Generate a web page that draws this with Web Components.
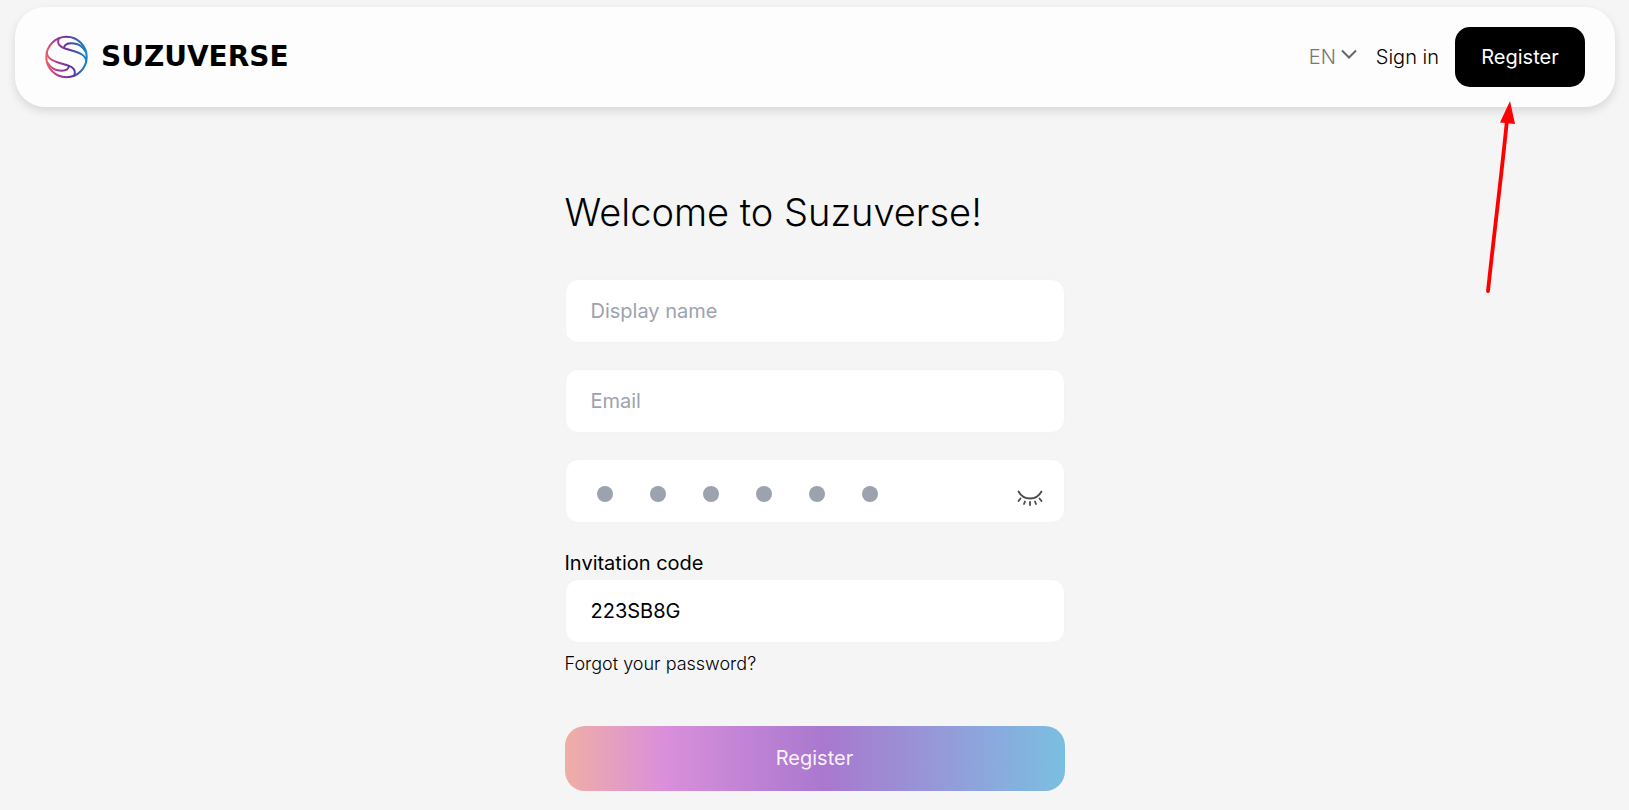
<!DOCTYPE html>
<html lang="en">
<head>
<meta charset="UTF-8">
<meta name="viewport" content="width=device-width, initial-scale=1.0">
<title>Suzuverse</title>
<style>
    body {
        margin: 0;
        min-height: 100vh;
        background-color: #f5f5f5;
        color: #000;
        font-family: Inter, "Liberation Sans", sans-serif;
        font-size: 20px;
        font-weight: 300;
    }
</style>
</head>
<body>
<suzu-page>
    <suzu-header slot="header">
        <suzu-logo slot="brand"></suzu-logo>
        <suzu-language></suzu-language>
        <suzu-link href="#signin">Sign in</suzu-link>
        <suzu-button>Register</suzu-button>
    </suzu-header>
    <suzu-register-form></suzu-register-form>
    <suzu-pointer slot="overlay"></suzu-pointer>
</suzu-page>

<script>
class SuzuPage extends HTMLElement {
    connectedCallback() {
        this.attachShadow({ mode: 'open' });
        this.shadowRoot.innerHTML = `
            <style>
                :host {
                    display: block;
                    position: relative;
                }

                main {
                    display: flex;
                    justify-content: center;
                    padding: 80px 15px 18px;
                }
            </style>
            <slot name="header"></slot>
            <main><slot></slot></main>
            <slot name="overlay"></slot>
        `;
    }
}

class SuzuHeader extends HTMLElement {
    connectedCallback() {
        this.attachShadow({ mode: 'open' });
        this.shadowRoot.innerHTML = `
            <style>
                :host {
                    display: block;
                    padding: 7px 14px 0 15px;
                }

                header {
                    display: flex;
                    justify-content: space-between;
                    align-items: center;
                    padding: 20px 30px;
                    border-radius: 30px;
                    background-color: #fdfdfd;
                    box-shadow: 0 4px 10px rgba(0, 0, 0, 0.12);
                }

                nav {
                    display: flex;
                    align-items: center;
                    gap: 16px;
                }
            </style>
            <header>
                <slot name="brand"></slot>
                <nav><slot></slot></nav>
            </header>
        `;
    }
}

class SuzuLogo extends HTMLElement {
    connectedCallback() {
        this.attachShadow({ mode: 'open' });
        this.shadowRoot.innerHTML = `
            <style>
                :host {
                    display: block;
                }

                a {
                    display: flex;
                    align-items: center;
                    gap: 12px;
                    color: #000;
                    font: 700 28px/32px "DejaVu Sans", sans-serif;
                    text-decoration: none;
                }
            </style>
            <a href="#">
                <svg width="44" height="44" viewBox="0 0 44 44" fill="none" stroke="url(#ring)" stroke-width="2" aria-hidden="true">
                    <defs>
                        <linearGradient id="ring" gradientUnits="userSpaceOnUse" x1="1" y1="24" x2="43" y2="20">
                            <stop offset="0" stop-color="#ed6060"/>
                            <stop offset="0.25" stop-color="#a83c98"/>
                            <stop offset="0.55" stop-color="#64309b"/>
                            <stop offset="0.8" stop-color="#3066b8"/>
                            <stop offset="1" stop-color="#0a8bd0"/>
                        </linearGradient>
                    </defs>
                    <circle cx="21.5" cy="22" r="20.2"/>
                    <path d="M14 3C11.500 9 15 12 20 13.500L30 16.500C38 19 42 22 41 28"/>
                    <path d="M19 13C19.500 9 24 8 29 8.500C35 9 38 12 41 17"/>
                    <path d="M29 41C31.500 35 28 32 23 30.500L13 27.500C5 25 1 22 2 16"/>
                    <path d="M24 31C23.500 35 19 36 14 35.500C8 35 5 32 2 27"/>
                </svg>
                <span>SUZUVERSE</span>
            </a>
        `;
    }
}

class SuzuLanguage extends HTMLElement {
    connectedCallback() {
        this.attachShadow({ mode: 'open' });
        this.shadowRoot.innerHTML = `
            <style>
                :host {
                    display: flex;
                    align-items: center;
                    color: #777;
                }

                label {
                    display: grid;
                    align-items: center;
                }

                select, svg {
                    grid-area: 1 / 1;
                }

                select {
                    appearance: none;
                    width: 51px;
                    margin: 0;
                    padding: 0;
                    border: 0;
                    background: none;
                    color: inherit;
                    font: inherit;
                }

                svg {
                    justify-self: end;
                    margin: 0 3px 6px 0;
                    pointer-events: none;
                }
            </style>
            <label>
                <select aria-label="Language">
                    <option>EN</option>
                </select>
                <svg width="16" height="10" viewBox="0 0 16 10" fill="none" stroke="#666" stroke-width="2" aria-hidden="true">
                    <path d="M1 1.500L8 8.500L15 1.500"/>
                </svg>
            </label>
        `;
    }
}

class SuzuLink extends HTMLElement {
    connectedCallback() {
        this.attachShadow({ mode: 'open' });
        this.shadowRoot.innerHTML = `
            <style>
                :host {
                    display: block;
                }

                a {
                    color: #000;
                    text-decoration: none;
                }
            </style>
            <a href="${this.getAttribute('href')}"><slot></slot></a>
        `;
    }
}

class SuzuButton extends HTMLElement {
    connectedCallback() {
        this.attachShadow({ mode: 'open' });
        this.shadowRoot.innerHTML = `
            <style>
                :host {
                    display: block;
                }

                button {
                    display: block;
                    width: 100%;
                    min-width: 130px;
                    padding: 18px 24px;
                    border: 0;
                    border-radius: 15px;
                    background: #000;
                    color: #fff;
                    font: 400 20px/24px Inter, sans-serif;
                    cursor: pointer;
                }

                :host([variant="gradient"]) button {
                    padding: 20px 24px 21px;
                    border-radius: 20px;
                    background: linear-gradient(90deg, #efaea5, #d98fdb 20%, #a978cf 52%, #949bd9 76%, #7abfe1);
                    color: #f8f2fb;
                }
            </style>
            <button type="button"><slot></slot></button>
        `;
    }
}

class SuzuField extends HTMLElement {
    connectedCallback() {
        const type = this.getAttribute('type') || 'text';
        const label = this.getAttribute('label') || '';
        const placeholder = this.getAttribute('placeholder') || '';
        const value = this.getAttribute('value') || '';
        const isPassword = type === 'password';

        this.attachShadow({ mode: 'open' });
        this.shadowRoot.innerHTML = `
            <style>
                :host {
                    display: block;
                    font-weight: 400;
                }

                label {
                    display: block;
                    line-height: 28px;
                    padding-bottom: 2px;
                }

                .box {
                    display: flex;
                    align-items: center;
                    position: relative;
                    border: 1px solid #f3f3f3;
                    border-radius: 13px;
                    background-color: #fff;
                }

                input {
                    flex: 1;
                    min-width: 0;
                    box-sizing: border-box;
                    height: 62px;
                    padding: 0 25px;
                    border: 0;
                    border-radius: 12px;
                    outline: none;
                    background: none;
                    color: #000;
                    font: inherit;
                }

                input::placeholder {
                    color: #9ca3af;
                    opacity: 1;
                }

                .dots {
                    position: absolute;
                    left: 31px;
                    top: 26px;
                    pointer-events: none;
                }

                input:not(:placeholder-shown) ~ .dots {
                    display: none;
                }

                button {
                    display: flex;
                    margin: 13px 21px 0 0;
                    padding: 0;
                    border: 0;
                    background: none;
                    cursor: pointer;
                }
            </style>
            ${label ? `<label for="input">${label}</label>` : ''}
            <div class="box">
                <input id="input" type="${type}" placeholder="${isPassword ? ' ' : placeholder}" value="${value}"
                    ${label ? '' : `aria-label="${placeholder}"`}>
                ${isPassword ? `
                <svg class="dots" width="282" height="16" viewBox="0 0 282 16" fill="#9ca3af" aria-hidden="true">
                    <circle cx="8" cy="8" r="8"/>
                    <circle cx="61" cy="8" r="8"/>
                    <circle cx="114" cy="8" r="8"/>
                    <circle cx="167" cy="8" r="8"/>
                    <circle cx="220" cy="8" r="8"/>
                    <circle cx="273" cy="8" r="8"/>
                </svg>
                <button type="button" aria-label="Show password">
                    <svg width="26" height="16" viewBox="0 0 26 16" fill="none" stroke="#4a4a4a" stroke-width="1.800" stroke-linecap="round">
                        <path d="M1.500 1.500C4 6 8 8.500 13 8.500S22 6 24.500 1.500"/>
                        <path d="M3.500 8.500L1.500 11M8 11.500L7 14M13 12V15M18 11.500L19 14M22.500 8.500L24.500 11"/>
                    </svg>
                </button>` : ''}
            </div>
        `;
    }
}

class SuzuRegisterForm extends HTMLElement {
    connectedCallback() {
        this.attachShadow({ mode: 'open' });
        this.shadowRoot.innerHTML = `
            <style>
                :host {
                    display: block;
                    width: 100%;
                    max-width: 500px;
                }

                h1 {
                    margin: 0 0 42px;
                    font-size: 38px;
                    font-weight: 300;
                    line-height: 50px;
                }

                .fields {
                    display: flex;
                    flex-direction: column;
                    gap: 26px;
                }

                .forgot {
                    display: block;
                    width: fit-content;
                    margin: 9px 0 50px;
                    color: #000;
                    font-size: 18px;
                    line-height: 24px;
                    text-decoration: none;
                }
            </style>
            <form>
                <h1>Welcome to Suzuverse!</h1>
                <div class="fields">
                    <suzu-field placeholder="Display name"></suzu-field>
                    <suzu-field type="email" placeholder="Email"></suzu-field>
                    <suzu-field type="password" placeholder="Password"></suzu-field>
                    <suzu-field label="Invitation code" value="223SB8G"></suzu-field>
                </div>
                <a class="forgot" href="#forgot">Forgot your password?</a>
                <suzu-button variant="gradient">Register</suzu-button>
            </form>
        `;
    }
}

// Red arrow that points at the header's Register button
class SuzuPointer extends HTMLElement {
    connectedCallback() {
        this.attachShadow({ mode: 'open' });
        this.shadowRoot.innerHTML = `
            <style>
                :host {
                    display: block;
                    position: absolute;
                    top: 100px;
                    right: 113px;
                    pointer-events: none;
                }

                svg {
                    display: block;
                }
            </style>
            <svg width="32" height="196" viewBox="0 0 32 196" aria-hidden="true">
                <path d="M4 191C10 134 17 80 23 20" fill="none" stroke="#f00" stroke-width="3.800" stroke-linecap="round"/>
                <path d="M26 1L31 24L16 22.500Z" fill="#f00"/>
            </svg>
        `;
    }
}

customElements.define('suzu-page', SuzuPage);
customElements.define('suzu-header', SuzuHeader);
customElements.define('suzu-logo', SuzuLogo);
customElements.define('suzu-language', SuzuLanguage);
customElements.define('suzu-link', SuzuLink);
customElements.define('suzu-button', SuzuButton);
customElements.define('suzu-field', SuzuField);
customElements.define('suzu-register-form', SuzuRegisterForm);
customElements.define('suzu-pointer', SuzuPointer);
</script>
</body>
</html>
